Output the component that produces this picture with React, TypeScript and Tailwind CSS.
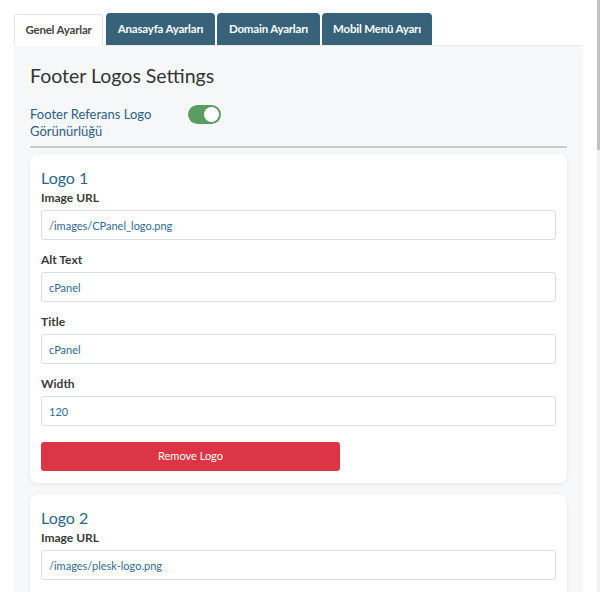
import React, { useState } from 'react';

type LogoItem = {
  imageUrl: string;
  altText: string;
  title: string;
  width: string;
};

const initialLogos: LogoItem[] = [
  { imageUrl: '/images/CPanel_logo.png', altText: 'cPanel', title: 'cPanel', width: '120' },
  { imageUrl: '/images/plesk-logo.png', altText: 'Plesk', title: 'Plesk', width: '120' },
];

const tabs = [
  { name: 'Genel Ayarlar', w: 'w-[89px]' },
  { name: 'Anasayfa Ayarları', w: 'w-[109px]' },
  { name: 'Domain Ayarları', w: 'w-[103px]' },
  { name: 'Mobil Menü Ayarı', w: 'w-[110px]' },
];

const Field = ({ label, value }: { label: string; value: string }) => (
  <div className="mb-[12px]">
    <label className="block text-[12px] leading-[16px] font-bold text-[#3a3a3a] mb-[4px]">{label}</label>
    <input
      readOnly
      value={value}
      className="w-full h-[30px] px-[7px] border border-[#d9dde2] rounded-[3px] bg-white text-[11px] text-[#2f6a8c] outline-none"
    />
  </div>
);

const App = () => {
  const [activeTab, setActiveTab] = useState(0);
  const [showLogos, setShowLogos] = useState(true);
  const [logos, setLogos] = useState<LogoItem[]>(initialLogos);

  const removeLogo = (index: number) => {
    setLogos(logos.filter((_, i) => i !== index));
  };

  return (
    <div className="flex h-[592px] overflow-hidden bg-white font-['Lato',sans-serif]">
      <div className="flex-1 pl-[14px] pr-[14px] pt-[13px]">
        {/* Tabs */}
        <div className="flex items-end border-b border-[#e4e6e9]">
          {tabs.map((tab, i) => (
            <button
              key={tab.name}
              onClick={() => setActiveTab(i)}
              className={
                i === activeTab
                  ? `${tab.w} h-[32px] mr-[3px] -mb-px bg-white border border-[#e2e4e7] border-b-white rounded-t-[4px] text-[11.5px] font-bold text-[#444] tracking-[-0.2px]`
                  : `${tab.w} h-[32px] mr-[2px] bg-[#37627a] rounded-t-[4px] text-[11.5px] font-bold text-white tracking-[-0.2px]`
              }
            >
              {tab.name}
            </button>
          ))}
        </div>

        {/* Panel */}
        <div className="bg-[#f7f8fa] rounded-tr-[6px] px-[16px] pt-[18px] h-full">
          <h2 className="text-[19.5px] leading-[24px] text-[#333] mb-[18px]">Footer Logos Settings</h2>

          <div className="flex items-start pb-[6px] border-b-2 border-[#c9cbcd]">
            <span className="w-[158px] text-[13px] leading-[17px] text-[#2c5f80]">
              Footer Referans Logo Görünürlüğü
            </span>
            <button
              onClick={() => setShowLogos(!showLogos)}
              className={`mt-[-1px] w-[33px] h-[19px] rounded-full flex items-center px-[2px] ${
                showLogos ? 'bg-[#5c9c63] justify-end' : 'bg-[#c9cbcd] justify-start'
              }`}
            >
              <span className="w-[15px] h-[15px] rounded-full bg-white" />
            </button>
          </div>

          <div className="pt-[6px]">
            {logos.map((logo, i) => (
              <div
                key={i}
                className="bg-white rounded-[8px] shadow-[0_1px_4px_rgba(0,0,0,0.08)] px-[11px] pt-[14px] pb-[12px] mb-[11px]"
              >
                <h3 className="text-[16px] leading-[20px] text-[#2d6688] mb-[2px]">Logo {i + 1}</h3>
                <Field label="Image URL" value={logo.imageUrl} />
                <Field label="Alt Text" value={logo.altText} />
                <Field label="Title" value={logo.title} />
                <Field label="Width" value={logo.width} />
                <button
                  onClick={() => removeLogo(i)}
                  className="mt-[4px] w-[299px] h-[29px] rounded-[3px] bg-[#dc3545] text-white text-[11px]"
                >
                  Remove Logo
                </button>
              </div>
            ))}
          </div>
        </div>
      </div>

      {/* scrollbar */}
      <div className="w-[3px] bg-[#f1f1f1]">
        <div className="h-[150px] bg-[#c1c1c1]" />
      </div>
    </div>
  );
};

export default App;
